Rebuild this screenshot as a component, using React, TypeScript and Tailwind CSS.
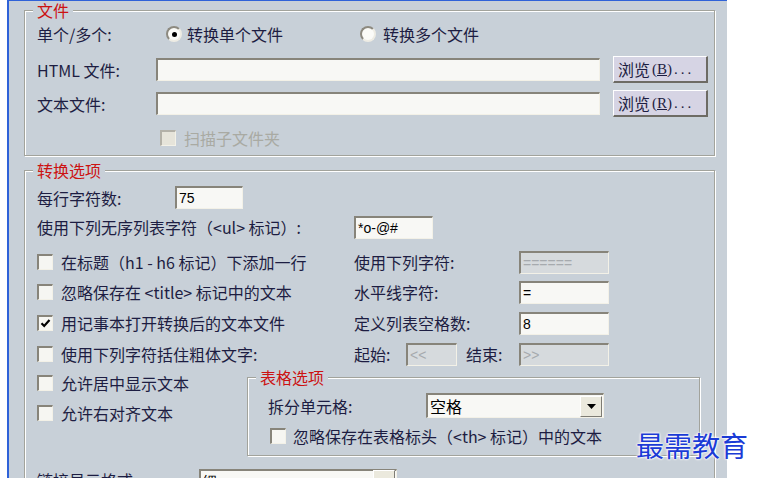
import clsx from 'clsx';

const PANEL = 'bg-[#c8d0d8]';

function Group({ title, className, children }: { title: string; className?: string; children: React.ReactNode }) {
  return (
    <fieldset className={clsx('min-w-0 border border-[#a2a39c] shadow-[inset_1px_1px_0_#fff,1px_1px_0_#fff]', className)}>
      <legend className={clsx('ml-[8px] px-[4px] h-[18px] leading-[18px] text-[#cc1212]', PANEL)}>{title}</legend>
      {children}
    </fieldset>
  );
}

function Field({ className, value, disabled, children }: { className?: string; value?: string; disabled?: boolean; children?: React.ReactNode }) {
  return (
    <div
      className={clsx(
        'h-[23px] shrink-0 flex items-center pl-[2px] border-t-2 border-l-2 border-b border-r border-t-[#87847a] border-l-[#87847a] border-b-[#f3f1e7] border-r-[#f3f1e7] text-[14px] font-["Liberation_Sans",sans-serif]',
        disabled ? 'bg-[#d6dadd] text-[#a6aaae]' : 'bg-[#f8f8f5] text-black',
        className
      )}
    >
      <span className="flex-1 leading-none">{value}</span>
      {children}
    </div>
  );
}

function Check({ checked, disabled }: { checked?: boolean; disabled?: boolean }) {
  return (
    <span
      className={clsx(
        'w-[16px] h-[16px] shrink-0 flex items-center justify-center border-t-2 border-l-2 border-b border-r border-b-[#f3f1e7] border-r-[#f3f1e7]',
        disabled ? 'bg-[#e6e4da] border-t-[#b3b1a8] border-l-[#b3b1a8]' : 'bg-[#f6f6f2] border-t-[#87847a] border-l-[#87847a]'
      )}
    >
      {checked && (
        <svg width="11" height="11" viewBox="0 0 11 11">
          <path d="M1.5 5.2 L4.2 8 L9.5 2" fill="none" stroke="#000" strokeWidth="2.2" />
        </svg>
      )}
    </span>
  );
}

function Radio({ checked }: { checked?: boolean }) {
  return (
    <span className="w-[16px] h-[16px] shrink-0 rounded-full flex items-center justify-center bg-[#fbfbf8] border-2 border-t-[#8d8a80] border-l-[#8d8a80] border-b-[#eeece4] border-r-[#eeece4]">
      {checked && <span className="w-[5px] h-[5px] rounded-full bg-black" />}
    </span>
  );
}

function Browse({ letter }: { letter: string }) {
  return (
    <button className="ml-[13px] w-[95px] h-[27px] shrink-0 flex items-center pl-[4px] bg-[#d6d4e4] border-t border-l border-t-white border-l-white border-b-2 border-r-2 border-b-[#6d6b64] border-r-[#6d6b64] text-[16px] text-[#1d1d42]">
      浏览<span className="font-['Liberation_Serif',serif] text-[15px] ml-[2px]">(<u>{letter}</u>)<span className="tracking-[3px] ml-[2px]">...</span></span>
    </button>
  );
}

function DropBtn() {
  return (
    <span className="w-[22px] h-[21px] mr-[1px] shrink-0 flex items-center justify-center bg-[#ebe9dd] border-t border-l border-t-white border-l-white border-b border-r border-b-[#7e7c74] border-r-[#7e7c74]">
      <svg width="9" height="5" viewBox="0 0 9 5">
        <path d="M0 0 H9 L4.5 5 Z" fill="#000" />
      </svg>
    </span>
  );
}

function Opt({ label, checked }: { label: string; checked?: boolean }) {
  return (
    <div className="flex items-center gap-[8px]">
      <Check checked={checked} />
      <span>{label}</span>
    </div>
  );
}

export default function App() {
  return (
    <div className="relative w-[758px] h-[478px] overflow-hidden bg-white flex font-['Noto_Sans_CJK_SC',sans-serif] text-[16px] leading-[20px] text-[#1d1d42]">
      <div className="w-[7px] shrink-0" />
      <div className={clsx('w-[720px] h-full shrink-0 border-l-2 border-t border-[#2f62d8] pl-[15px] pr-[12px]', PANEL)}>
        {/* 文件 */}
        <Group title="文件">
          <div className="pl-[12px] pt-[3px] pb-[7px]">
            <div className="flex items-center h-[24px]">
              <span className="w-[129px]">单个/多个:</span>
              <div className="w-[194px] flex items-center gap-[5px]">
                <Radio checked />
                <span>转换单个文件</span>
              </div>
              <div className="flex items-center gap-[7px]">
                <Radio />
                <span>转换多个文件</span>
              </div>
            </div>
            <div className="flex items-center h-[27px] mt-[10px]">
              <span className="w-[119px]">HTML 文件:</span>
              <Field className="w-[444px]" />
              <Browse letter="B" />
            </div>
            <div className="flex items-center h-[27px] mt-[7px]">
              <span className="w-[119px]">文本文件:</span>
              <Field className="w-[444px]" />
              <Browse letter="R" />
            </div>
            <div className="flex items-center h-[20px] mt-[11px] pl-[123px] gap-[8px] text-[#a9aaa3]">
              <Check disabled />
              <span>扫描子文件夹</span>
            </div>
          </div>
        </Group>

        {/* 转换选项 */}
        <Group title="转换选项" className="mt-[5px]">
          <div className="pl-[12px] pt-[7px]">
            <div className="flex items-center h-[23px]">
              <span className="w-[138px]">每行字符数:</span>
              <Field className="w-[68px]" value="75" />
            </div>
            <div className="flex items-center h-[24px] mt-[6px]">
              <span className="w-[317px]">使用下列无序列表字符（&lt;ul&gt; 标记）:</span>
              <Field className="w-[79px]" value="*o-@#" />
            </div>
            <div className="flex items-center h-[24px] mt-[11px]">
              <div className="w-[317px]"><Opt label="在标题（h1 - h6 标记）下添加一行" /></div>
              <span className="w-[165px]">使用下列字符:</span>
              <Field className="w-[90px]" value="======" disabled />
            </div>
            <div className="flex items-center h-[24px] mt-[6px]">
              <div className="w-[317px]"><Opt label="忽略保存在 <title> 标记中的文本" /></div>
              <span className="w-[165px]">水平线字符:</span>
              <Field className="w-[90px]" value="=" />
            </div>
            <div className="flex items-center h-[24px] mt-[7px]">
              <div className="w-[317px]"><Opt label="用记事本打开转换后的文本文件" checked /></div>
              <span className="w-[165px]">定义列表空格数:</span>
              <Field className="w-[90px]" value="8" />
            </div>
            <div className="flex items-center h-[24px] mt-[7px]">
              <div className="w-[317px]"><Opt label="使用下列字符括住粗体文字:" /></div>
              <span className="w-[52px]">起始:</span>
              <Field className="w-[51px]" value="<<" disabled />
              <span className="w-[53px] ml-[9px]">结束:</span>
              <Field className="w-[90px]" value=">>" disabled />
            </div>

            <div className="flex items-start">
              <div className="w-[210px] pt-[5px]">
                <div className="flex items-center h-[24px]"><Opt label="允许居中显示文本" /></div>
                <div className="flex items-center h-[24px] mt-[6px]"><Opt label="允许右对齐文本" /></div>
              </div>
              <Group title="表格选项" className="w-[453px] mt-[2px]">
                <div className="pl-[20px] pt-[7px] pb-[9px]">
                  <div className="flex items-center h-[25px]">
                    <span className="w-[158px]">拆分单元格:</span>
                    <Field className="w-[178px] h-[25px] font-['Noto_Sans_CJK_SC',sans-serif] text-[16px]" value="空格">
                      <DropBtn />
                    </Field>
                  </div>
                  <div className="flex items-center h-[20px] mt-[8px] pl-[2px] gap-[7px]">
                    <Check />
                    <span>忽略保存在表格标头（&lt;th&gt; 标记）中的文本</span>
                  </div>
                </div>
              </Group>
            </div>

            <div className="flex items-center h-[24px] mt-[12px]">
              <span className="w-[162px]">链接显示格式:</span>
              <Field className="w-[198px]" value="细">
                <DropBtn />
              </Field>
            </div>
          </div>
        </Group>
      </div>

      {/* watermark */}
      <div className="absolute left-[636px] top-[428px] text-[28px] leading-[34px] text-[#1b3bd6] [text-shadow:0_0_2px_#fff,0_0_2px_#fff,0_0_3px_#fff] font-['Noto_Sans_CJK_SC',serif]">
        最需教育
      </div>
    </div>
  );
}
